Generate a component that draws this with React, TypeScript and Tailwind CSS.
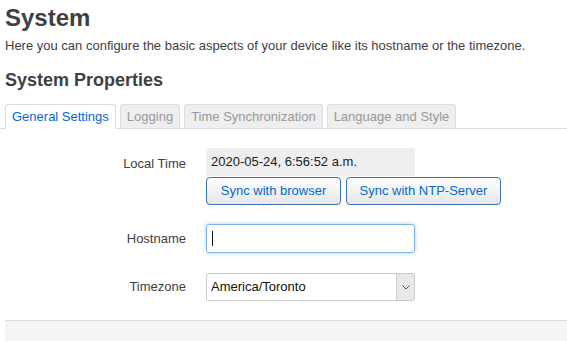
export default function App() {
  return (
    <div className="w-[567px] h-[341px] overflow-hidden bg-white text-[#404040] font-['Liberation_Sans',Arial,sans-serif]">
      <div className="px-[5px] pt-[4px]">
        <h1 className="text-[24px] font-bold leading-[28px] text-[#404040]">System</h1>
        <p className="text-[13px] leading-[16px] mt-[6px]">
          Here you can configure the basic aspects of your device like its hostname or the timezone.
        </p>
        <h2 className="text-[18px] font-bold leading-[22px] mt-[15px]">System Properties</h2>
      </div>

      <div className="mt-[13px] flex gap-[4px] pl-[5px] border-b border-[#ddd] h-[25px]">
        <div className="h-[25px] px-[6px] flex items-center border border-[#ddd] border-b-white bg-white rounded-t-[3px] text-[13px] text-[#0069d6]">
          General Settings
        </div>
        {["Logging", "Time Synchronization", "Language and Style"].map((t) => (
          <div
            key={t}
            className="h-[24px] px-[6px] flex items-center border border-[#ddd] border-b-0 bg-[#eee] rounded-t-[3px] text-[13px] text-[#999]"
          >
            {t}
          </div>
        ))}
      </div>

      <div className="pt-[19px] text-[13px]">
        <div className="flex">
          <div className="w-[186px] text-right pt-[6px] text-[#404040]">Local Time</div>
          <div className="ml-[20px]">
            <div className="w-[209px] h-[28px] bg-[#eee] rounded-[3px] flex items-center px-[5px] text-[#222]">
              2020-05-24, 6:56:52 a.m.
            </div>
            <div className="flex gap-[5px] mt-[1px]">
              <button className="w-[135px] h-[28px] border border-[#3b73b9] rounded-[4px] bg-gradient-to-b from-white to-[#e6e6e6] text-[#0069d6] text-[13px]">
                Sync with browser
              </button>
              <button className="w-[155px] h-[28px] border border-[#3b73b9] rounded-[4px] bg-gradient-to-b from-white to-[#e6e6e6] text-[#0069d6] text-[13px]">
                Sync with NTP-Server
              </button>
            </div>
          </div>
        </div>

        <div className="flex mt-[19px] items-center">
          <div className="w-[186px] text-right text-[#404040]">Hostname</div>
          <div className="ml-[20px] w-[209px] h-[29px] border border-[#7eb2e6] rounded-[3px] shadow-[0_0_4px_rgba(82,168,236,0.5)] flex items-center px-[5px]">
            <span className="w-px h-[15px] bg-[#111]" />
          </div>
        </div>

        <div className="flex mt-[20px] items-center">
          <div className="w-[186px] text-right text-[#404040]">Timezone</div>
          <div className="ml-[20px] w-[209px] h-[28px] border border-[#ccc] rounded-[2px] flex items-center text-[#111]">
            <span className="flex-1 pl-[4px]">America/Toronto</span>
            <span className="w-[18px] h-full border-l border-[#ccc] bg-[#e8e8e8] flex items-center justify-center">
              <svg width="8" height="5" viewBox="0 0 8 5">
                <path d="M0.5 0.5 L4 4 L7.5 0.5" fill="none" stroke="#555" strokeWidth="1" />
              </svg>
            </span>
          </div>
        </div>
      </div>

      <div className="ml-[5px] mt-[19px] h-[30px] bg-[#f5f5f5] border-t border-[#ddd]" />
    </div>
  );
}
